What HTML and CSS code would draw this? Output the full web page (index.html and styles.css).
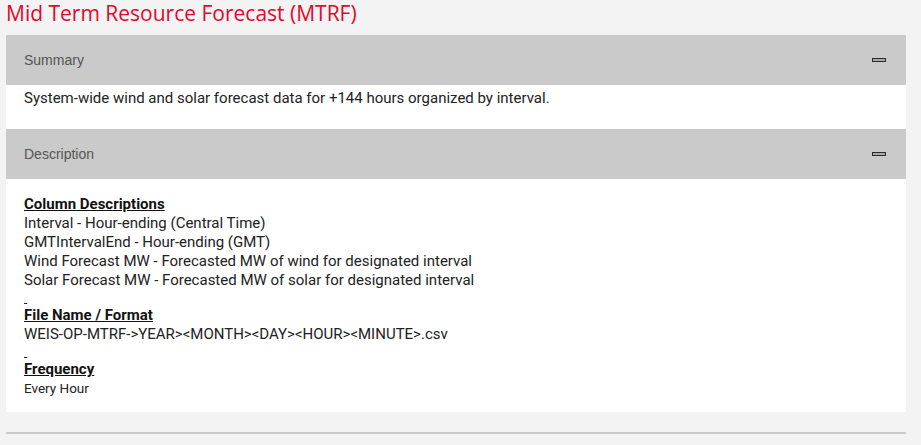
FILE: index.html
```html
<!DOCTYPE html>
<html lang="en">
<head>
<meta charset="utf-8">
<title>Mid Term Resource Forecast (MTRF)</title>
<link rel="stylesheet" href="styles.css">
</head>
<body>
<div class="page">
  <h1 class="title">Mid Term Resource Forecast (MTRF)</h1>

  <section class="panel">
    <div class="panel-head">
      <span class="panel-label">Summary</span>
      <span class="collapse-icon" aria-hidden="true"></span>
    </div>
    <div class="panel-body summary-body">
      <p>System-wide wind and solar forecast data for +144 hours organized by interval.</p>
    </div>
  </section>

  <section class="panel">
    <div class="panel-head">
      <span class="panel-label">Description</span>
      <span class="collapse-icon" aria-hidden="true"></span>
    </div>
    <div class="panel-body desc-body">
      <div class="line heading">Column Descriptions</div>
      <div class="line">Interval - Hour-ending (Central Time)</div>
      <div class="line">GMTIntervalEnd - Hour-ending (GMT)</div>
      <div class="line">Wind Forecast MW - Forecasted MW of wind for designated interval</div>
      <div class="line">Solar Forecast MW - Forecasted MW of solar for designated interval</div>
      <div class="spacer"><u>&nbsp;</u></div>
      <div class="line heading">File Name / Format</div>
      <div class="line">WEIS-OP-MTRF-&gt;YEAR&gt;&lt;MONTH&gt;&lt;DAY&gt;&lt;HOUR&gt;&lt;MINUTE&gt;.csv</div>
      <div class="spacer"><u>&nbsp;</u></div>
      <div class="line heading">Frequency</div>
      <div class="line small">Every Hour</div>
    </div>
  </section>

  <hr class="rule">
</div>
</body>
</html>
```

FILE: styles.css
```css
html, body {
  margin: 0;
  padding: 0;
  background: #f3f3f3;
}

.page {
  width: 900px;
  padding: 1px 0 0 6px;
}

.title {
  margin: 0 0 10px 0;
  font-family: "Open Sans", "Noto Sans", sans-serif;
  font-weight: 400;
  font-size: 21px;
  line-height: 24px;
  color: #e4062f;
}

.panel {
  background: #fff;
}

.panel-head {
  display: flex;
  align-items: center;
  justify-content: space-between;
  background: #cacaca;
  padding: 15px 20px 15px 18px;
  height: 20px;
}

.panel-label {
  font-family: "Liberation Sans", Arial, sans-serif;
  font-size: 14px;
  line-height: 20px;
  color: #555;
}

.collapse-icon {
  display: block;
  width: 12px;
  height: 2px;
  border: 1px solid #2b2b2b;
  background: #a9a9a9;
  margin-top: -1px;
}

.panel-body {
  font-family: Roboto, "Liberation Sans", sans-serif;
  font-size: 15px;
  line-height: 19px;
  color: #222;
  padding: 0 18px;
}

.summary-body {
  padding-top: 4px;
  padding-bottom: 21px;
}

.summary-body p {
  margin: 0;
}

.desc-body {
  padding-top: 16px;
  padding-bottom: 14px;
}

.line {
  height: 19px;
  white-space: nowrap;
}

.heading {
  font-weight: 700;
  text-decoration: underline;
  color: #111;
}

.small {
  font-size: 13.5px;
}

.spacer {
  height: 16px;
  font-size: 13px;
  line-height: 16px;
}

.rule {
  margin: 20px 0 0 0;
  border: 0;
  border-top: 2px solid #cbcbcb;
  height: 0;
}
```
